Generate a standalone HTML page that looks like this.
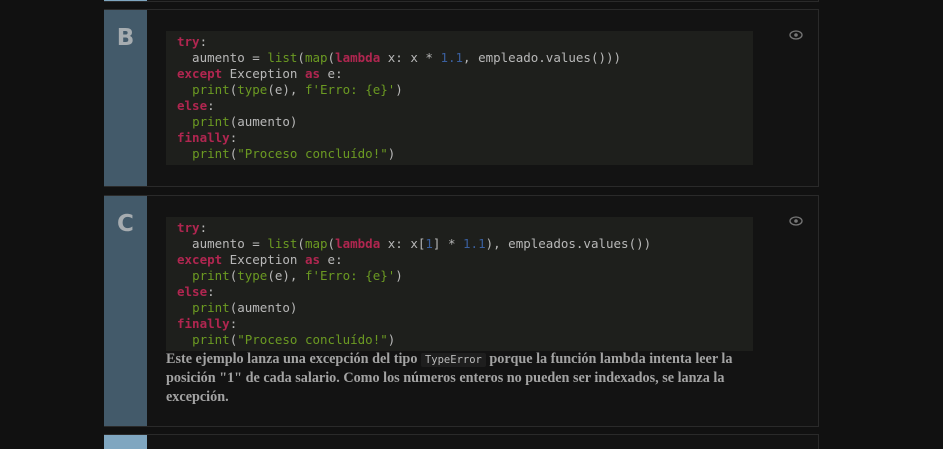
<!DOCTYPE html>
<html><head><style>
html,body{margin:0;padding:0;background:#111;width:943px;height:449px;overflow:hidden;position:relative;}
.card{position:absolute;left:104px;width:715px;background:#131313;border:1px solid #2a2a2a;box-sizing:border-box;}
.strip{position:absolute;left:-1px;top:0;bottom:0;width:43px;background:#435a6a;}
.strip span{position:absolute;top:15px;left:0;width:43px;text-align:center;font:bold 23px "DejaVu Sans","Liberation Sans",sans-serif;color:#a6acb0;}
pre{position:absolute;left:61px;width:587px;margin:0;background:#1e1f1c;padding:3px 0 3px 11px;box-sizing:border-box;font:12.5px/16px "DejaVu Sans Mono","Liberation Mono",monospace;color:#b8b8b8;}
.k{color:#b02650;font-weight:bold}.f{color:#6b9a22}.n{color:#3a5f9e}.s{color:#6b9a22}
.eye{position:absolute;left:684px;top:20px;}
p{position:absolute;left:61px;top:154px;width:600px;margin:0;font:bold 14.2px/19px "Liberation Serif",serif;color:#a3a3a3;}
code{font:10.5px "DejaVu Sans Mono",monospace;background:#1e1e1e;padding:1px 4px;color:#bbb;font-weight:normal;border-radius:2px;}
</style></head><body>
<div class="card" style="top:-20px;height:22px;"><div class="strip" style="background:#7fa6c0"></div></div>
<div class="card" style="top:9px;height:178px;">
<div class="strip"><span>B</span></div>
<svg class="eye" width="14" height="10" viewBox="0 0 14 10"><ellipse cx="7" cy="5" rx="6" ry="4" fill="none" stroke="#777" stroke-width="1.3"/><circle cx="7" cy="5" r="1.8" fill="#777"/></svg>
<pre style="top:21px;height:134px;"><span class="k">try</span>:
  aumento = <span class="f">list</span>(<span class="f">map</span>(<span class="k">lambda</span> x: x * <span class="n">1.1</span>, empleado.values()))
<span class="k">except</span> Exception <span class="k">as</span> e:
  <span class="f">print</span>(<span class="f">type</span>(e), <span class="s">f'Erro: {e}'</span>)
<span class="k">else</span>:
  <span class="f">print</span>(aumento)
<span class="k">finally</span>:
  <span class="f">print</span>(<span class="s">"Proceso concluído!"</span>)</pre>
</div>
<div class="card" style="top:195px;height:232px;">
<div class="strip"><span>C</span></div>
<svg class="eye" width="14" height="10" viewBox="0 0 14 10"><ellipse cx="7" cy="5" rx="6" ry="4" fill="none" stroke="#777" stroke-width="1.3"/><circle cx="7" cy="5" r="1.8" fill="#777"/></svg>
<pre style="top:21px;height:134px;"><span class="k">try</span>:
  aumento = <span class="f">list</span>(<span class="f">map</span>(<span class="k">lambda</span> x: x[<span class="n">1</span>] * <span class="n">1.1</span>), empleados.values())
<span class="k">except</span> Exception <span class="k">as</span> e:
  <span class="f">print</span>(<span class="f">type</span>(e), <span class="s">f'Erro: {e}'</span>)
<span class="k">else</span>:
  <span class="f">print</span>(aumento)
<span class="k">finally</span>:
  <span class="f">print</span>(<span class="s">"Proceso concluído!"</span>)</pre>
<p>Este ejemplo lanza una excepción del tipo <code>TypeError</code> porque la función lambda intenta leer la posición "1" de cada salario. Como los números enteros no pueden ser indexados, se lanza la excepción.</p>
</div>
<div class="card" style="top:434px;height:15px;border-bottom:none;"><div class="strip" style="background:#7fa6c0"></div></div>
</body></html>
